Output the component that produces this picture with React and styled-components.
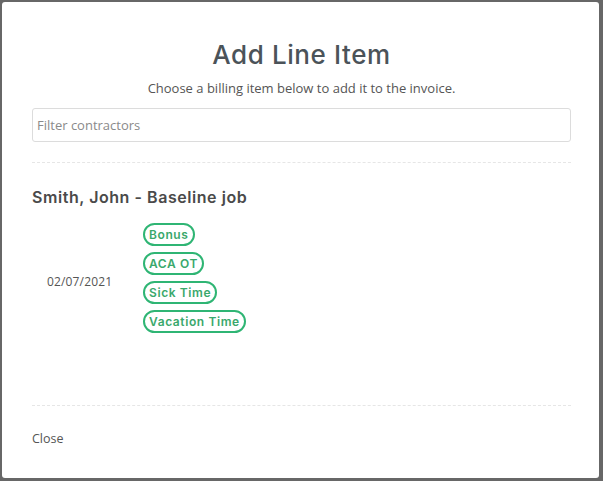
import React from 'react'
import styled, { createGlobalStyle } from 'styled-components';

const GlobalStyle = createGlobalStyle`
    html, body {
        margin: 0;
        padding: 0;
        background: #676767;
    }
    * {
        box-sizing: border-box;
    }
`;

const Backdrop = styled.div`
    width: 603px;
    height: 481px;
    padding: 2px 0 0 2px;
    background: #676767;
`;

const Modal = styled.div`
    width: 597px;
    height: 476px;
    background: #fff;
    border-radius: 3px;
    padding: 0 28px 0 30px;
    display: flex;
    flex-direction: column;
`;

const Title = styled.h2`
    margin: 37px 0 0;
    font-family: "Inter", sans-serif;
    font-weight: 500;
    font-size: 26px;
    line-height: 32px;
    color: #4b5359;
    text-align: center;
    letter-spacing: 0.6px;
`;

const Subtitle = styled.p`
    margin: 8px 0 0;
    font-family: "Open Sans", sans-serif;
    font-size: 13px;
    line-height: 18px;
    color: #555;
    text-align: center;
`;

const Filter = styled.input`
    display: block;
    width: 100%;
    height: 34px;
    margin-top: 11px;
    padding: 0 4px;
    border: 1px solid #dcdcdc;
    border-radius: 3px;
    font-family: "Open Sans", sans-serif;
    font-size: 13px;
    color: #555;
    outline: none;
    &::placeholder {
        color: #8a8a8a;
    }
`;

const Divider = styled.hr`
    margin: ${props => props.$top || 0}px 0 0;
    ${props => props.$push && 'margin-top: auto;'}
    border: none;
    border-top: 1px dashed #e6e6e6;
`;

const Group = styled.section`
    margin-top: 23px;
`;

const GroupTitle = styled.h3`
    margin: 0;
    font-family: "Inter", sans-serif;
    font-weight: 600;
    font-size: 16px;
    line-height: 22px;
    color: #4a4a4a;
    letter-spacing: 0.55px;
`;

const Row = styled.div`
    display: flex;
    align-items: center;
    margin-top: 15px;
`;

const DateCell = styled.div`
    width: 111px;
    padding-left: 15px;
    padding-top: 7px;
    font-family: "Open Sans", sans-serif;
    font-size: 12px;
    letter-spacing: 0.15px;
    color: #555;
`;

const Pills = styled.div`
    display: flex;
    flex-direction: column;
    align-items: flex-start;
    gap: 6px;
`;

const Pill = styled.button`
    height: 23px;
    padding: 0 4px;
    background: #fff;
    border: 2px solid #2fb574;
    border-radius: 12px;
    font-family: "Inter", sans-serif;
    font-weight: 600;
    font-size: 12px;
    line-height: 19px;
    letter-spacing: 0.6px;
    color: #3aa86c;
    cursor: pointer;
`;

const Footer = styled.footer`
    padding: 23px 0 31px;
`;

const CloseLink = styled.a`
    font-family: "Open Sans", sans-serif;
    font-size: 12.5px;
    line-height: 16px;
    color: #555;
    cursor: pointer;
`;

const items = ['Bonus', 'ACA OT', 'Sick Time', 'Vacation Time'];

export default function App() {
    return (
        <>
            <GlobalStyle />
            <Backdrop>
                <Modal>
                    <Title>Add Line Item</Title>
                    <Subtitle>Choose a billing item below to add it to the invoice.</Subtitle>
                    <Filter placeholder="Filter contractors" />
                    <Divider $top={20} />
                    <Group>
                        <GroupTitle>Smith, John - Baseline job</GroupTitle>
                        <Row>
                            <DateCell>02/07/2021</DateCell>
                            <Pills>
                                {items.map(item => (
                                    <Pill key={item}>{item}</Pill>
                                ))}
                            </Pills>
                        </Row>
                    </Group>
                    <Divider $push />
                    <Footer>
                        <CloseLink>Close</CloseLink>
                    </Footer>
                </Modal>
            </Backdrop>
        </>
    )
}
